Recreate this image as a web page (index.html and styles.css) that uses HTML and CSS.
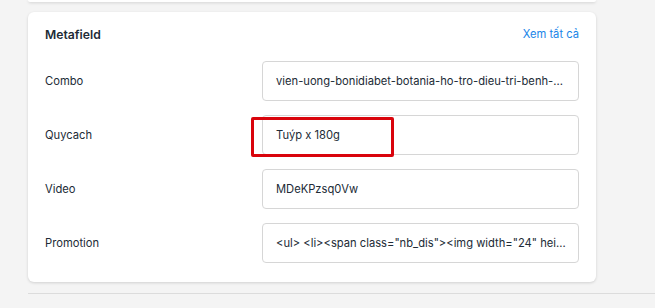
FILE: index.html
```html
<!DOCTYPE html>
<html lang="vi">
<head>
    <meta charset="UTF-8">
    <meta name="viewport" content="width=device-width, initial-scale=1.0">
    <title>Metafield</title>
    <link rel="stylesheet" href="styles.css">
</head>
<body>
    <div class="page">
        <!-- bottom edge of the previous card -->
        <div class="card card-prev"></div>

        <div class="card">
            <div class="card-header">
                <h2>Metafield</h2>
                <a href="#" class="link">Xem tất cả</a>
            </div>

            <div class="field-row">
                <label>Combo</label>
                <div class="field-input">vien-uong-bonidiabet-botania-ho-tro-dieu-tri-benh-...</div>
            </div>

            <div class="field-row">
                <label>Quycach</label>
                <div class="field-input highlighted">Tuýp x 180g</div>
            </div>

            <div class="field-row">
                <label>Video</label>
                <div class="field-input">MDeKPzsq0Vw</div>
            </div>

            <div class="field-row">
                <label>Promotion</label>
                <div class="field-input">&lt;ul&gt; &lt;li&gt;&lt;span class="nb_dis"&gt;&lt;img width="24" hei...</div>
            </div>
        </div>

        <div class="divider"></div>
    </div>
</body>
</html>
```

FILE: styles.css
```css
:root {
    --bg-color: #f4f4f4;
    --text-color: #212b36;
    --link-color: #1a85e8;
    --border-color: #d6d6d6;
    --shadow: 0 1px 3px rgba(0, 0, 0, 0.15);
}

*, *::after {
    box-sizing: border-box;
    margin: 0;
    padding: 0;
}

body {
    font-family: Inter, 'Noto Sans', sans-serif;
    color: var(--text-color);
    background-color: var(--bg-color);
    overflow: hidden;
}

.page {
    padding-left: 28px;
}

.card {
    width: 568px;
    background: #fff;
    border-radius: 6px;
    box-shadow: var(--shadow);
    padding: 13px 17px 19px;
}

.card-prev {
    height: 2px;
    padding: 0;
    border-radius: 0 0 6px 6px;
    margin-bottom: 10px;
}

.card-header {
    display: flex;
    justify-content: space-between;
    align-items: center;
    height: 18px;
    margin-bottom: 18px;
}

h2 {
    font-size: 12.2px;
    font-weight: 600;
}

.link {
    color: var(--link-color);
    text-decoration: none;
    font-size: 11.2px;
}

.field-row {
    display: flex;
    align-items: center;
    margin-bottom: 14px;
}

.field-row:last-child {
    margin-bottom: 0;
}

label {
    width: 217px;
    font-size: 11.2px;
}

.field-input {
    position: relative;
    width: 317px;
    height: 40px;
    border: 1px solid var(--border-color);
    border-radius: 4px;
    padding: 0 13px;
    display: flex;
    align-items: center;
    font-size: 11.2px;
    white-space: nowrap;
}

/* red annotation box drawn over the input */
.highlighted::after {
    content: "";
    position: absolute;
    left: -12px;
    top: 1px;
    width: 143px;
    height: 40px;
    border: 3px solid #d9040c;
    border-radius: 2px;
}

.divider {
    margin-top: 11px;
    border-top: 1px solid #dcdcdc;
}
```
